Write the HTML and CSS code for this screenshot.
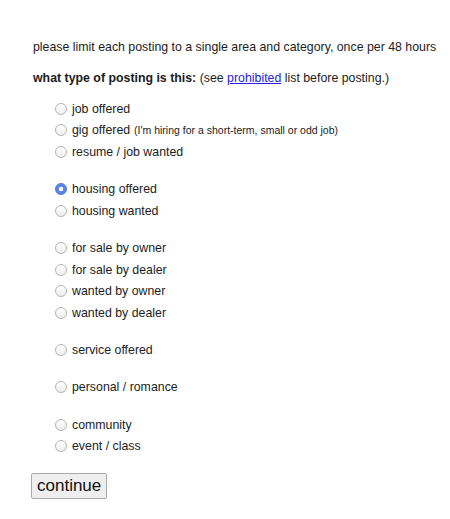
FILE: index.html
```html
<!DOCTYPE html>
<html lang="en">
<head>
  <meta charset="UTF-8">
  <title>choose type</title>
  <link rel="stylesheet" href="styles.css">
</head>
<body>
  <form class="picker" id="type-form">
    <p class="limit">please limit each posting to a single area and category, once per 48 hours</p>
    <p class="question"><b>what type of posting is this:</b> (see <a href="#">prohibited</a> list before posting.)</p>

    <div class="choices">
      <div class="group">
        <label class="choice"><input type="radio" name="id" value="jo"> job offered</label>
        <label class="choice"><input type="radio" name="id" value="go"> gig offered <small>(I'm hiring for a short-term, small or odd job)</small></label>
        <label class="choice"><input type="radio" name="id" value="rw"> resume / job wanted</label>
      </div>
      <div class="group">
        <label class="choice"><input type="radio" name="id" value="ho" checked> housing offered</label>
        <label class="choice"><input type="radio" name="id" value="hw"> housing wanted</label>
      </div>
      <div class="group">
        <label class="choice"><input type="radio" name="id" value="fso"> for sale by owner</label>
        <label class="choice"><input type="radio" name="id" value="fsd"> for sale by dealer</label>
        <label class="choice"><input type="radio" name="id" value="iwo"> wanted by owner</label>
        <label class="choice"><input type="radio" name="id" value="iwd"> wanted by dealer</label>
      </div>
      <div class="group">
        <label class="choice"><input type="radio" name="id" value="so"> service offered</label>
      </div>
      <div class="group">
        <label class="choice"><input type="radio" name="id" value="p"> personal / romance</label>
      </div>
      <div class="group">
        <label class="choice"><input type="radio" name="id" value="c"> community</label>
        <label class="choice"><input type="radio" name="id" value="e"> event / class</label>
      </div>
    </div>

    <button type="submit" class="go">continue</button>
  </form>
</body>
</html>
```

FILE: styles.css
```css
* {
  box-sizing: border-box;
  margin: 0;
  padding: 0;
}
body {
  font-family: 'Liberation Sans', Arial, Helvetica, sans-serif;
  font-size: 12.35px;
  color: #1c1c1c;
  background: #fff;
}
.picker {
  padding: 38px 0 0 33px;
}
.limit,
.question {
  line-height: 18px;
  white-space: nowrap;
}
.question {
  margin-top: 13px;
}
.question a {
  color: #2424e0;
}
.choices {
  margin-top: 11px;
}
.group + .group {
  margin-top: 15.7px;
}
.choice {
  display: flex;
  align-items: center;
  height: 21.6px;
  padding-left: 22px;
  white-space: nowrap;
}
.choice small {
  font-size: 10.5px;
  margin-left: 4px;
}
.choice input {
  appearance: none;
  -webkit-appearance: none;
  width: 12px;
  height: 12px;
  margin-right: 5px;
  border: 1px solid #b4b4b4;
  border-radius: 50%;
  background: linear-gradient(#ffffff, #ededed);
  flex: none;
}
.choice input:checked {
  border-color: #4f78e0;
  background: radial-gradient(circle, #fff 0 2px, #5b83e8 2.6px);
}
/* the submit button sits a little left of the text column */
.go {
  margin: 16px 0 0 -2px;
  height: 26px;
  padding: 0 5px;
  font-family: inherit;
  font-size: 17px;
  color: #111;
  background: #efefef;
  border: 1px solid #a9a9a9;
  border-radius: 2px;
}
```
